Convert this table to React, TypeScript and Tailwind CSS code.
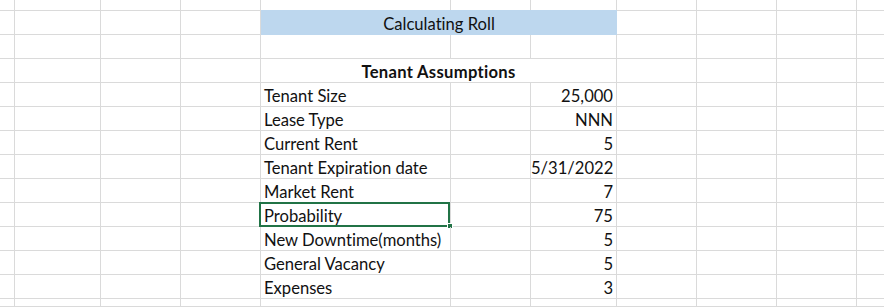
import React from "react";

const COLS = 11;
const font = { fontFamily: "Lato, 'Open Sans', sans-serif" };

const rows: { label: string; value: string }[] = [
  { label: "Tenant Size", value: "25,000" },
  { label: "Lease Type", value: "NNN" },
  { label: "Current Rent", value: "5" },
  { label: "Tenant Expiration date", value: "5/31/2022" },
  { label: "Market Rent", value: "7" },
  { label: "Probability", value: "75" },
  { label: "New Downtime(months)", value: "5" },
  { label: "General Vacancy", value: "5" },
  { label: "Expenses", value: "3" },
];

function Blank({ last }: { last?: boolean }) {
  return (
    <div
      className={
        last
          ? "border-b border-[#dadada]"
          : "border-r border-b border-[#dadada]"
      }
    />
  );
}

function BlankRow() {
  return (
    <>
      {Array.from({ length: COLS }).map((_, i) => (
        <Blank key={i} last={i === COLS - 1} />
      ))}
    </>
  );
}

export default function App() {
  return (
    <div
      className="w-[884px] h-[307px] overflow-hidden bg-white text-[#111] text-[16.6px] leading-[23px] [font-variant-ligatures:none] [font-feature-settings:'liga'_0,'clig'_0]"
      style={font}
    >
      <div className="grid grid-cols-[15px_86px_80px_80px_190px_80px_86px_80px_80px_80px_27px] grid-rows-[11px_repeat(12,24px)_8px]">
        {/* row 0 */}
        <BlankRow />

        {/* row 1: title */}
        <Blank />
        <Blank />
        <Blank />
        <Blank />
        <div className="col-span-3 bg-[#bdd7ee] -mt-px pt-[3px] text-center whitespace-nowrap">
          Calculating Roll
        </div>
        <Blank />
        <Blank />
        <Blank />
        <Blank last />

        {/* row 2 */}
        <BlankRow />

        {/* row 3: Tenant Assumptions */}
        <Blank />
        <Blank />
        <Blank />
        <Blank />
        <div className="col-span-3 border-r border-b border-[#dadada] pt-[2px] text-center font-bold tracking-[0.3px] whitespace-nowrap">
          Tenant Assumptions
        </div>
        <Blank />
        <Blank />
        <Blank />
        <Blank last />

        {rows.map((r) => (
          <React.Fragment key={r.label}>
            <Blank />
            <Blank />
            <Blank />
            <Blank />
            <div className="relative border-r border-b border-[#dadada] pl-[3px] pt-[2px] whitespace-nowrap">
              {r.label}
              {r.label === "Probability" && (
                <>
                  <div className="absolute left-[-2px] top-[-1px] w-[191px] h-[25px] border-2 border-[#217346]" />
                  <div className="absolute left-[186px] top-[20px] w-[6px] h-[6px] bg-[#217346] border border-white" />
                </>
              )}
            </div>
            <Blank />
            <div className="border-r border-b border-[#dadada] pr-[3px] pt-[2px] text-right whitespace-nowrap">
              {r.value}
            </div>
            <Blank />
            <Blank />
            <Blank />
            <Blank last />
          </React.Fragment>
        ))}

        {/* last partial row */}
        <BlankRow />
      </div>
    </div>
  );
}
